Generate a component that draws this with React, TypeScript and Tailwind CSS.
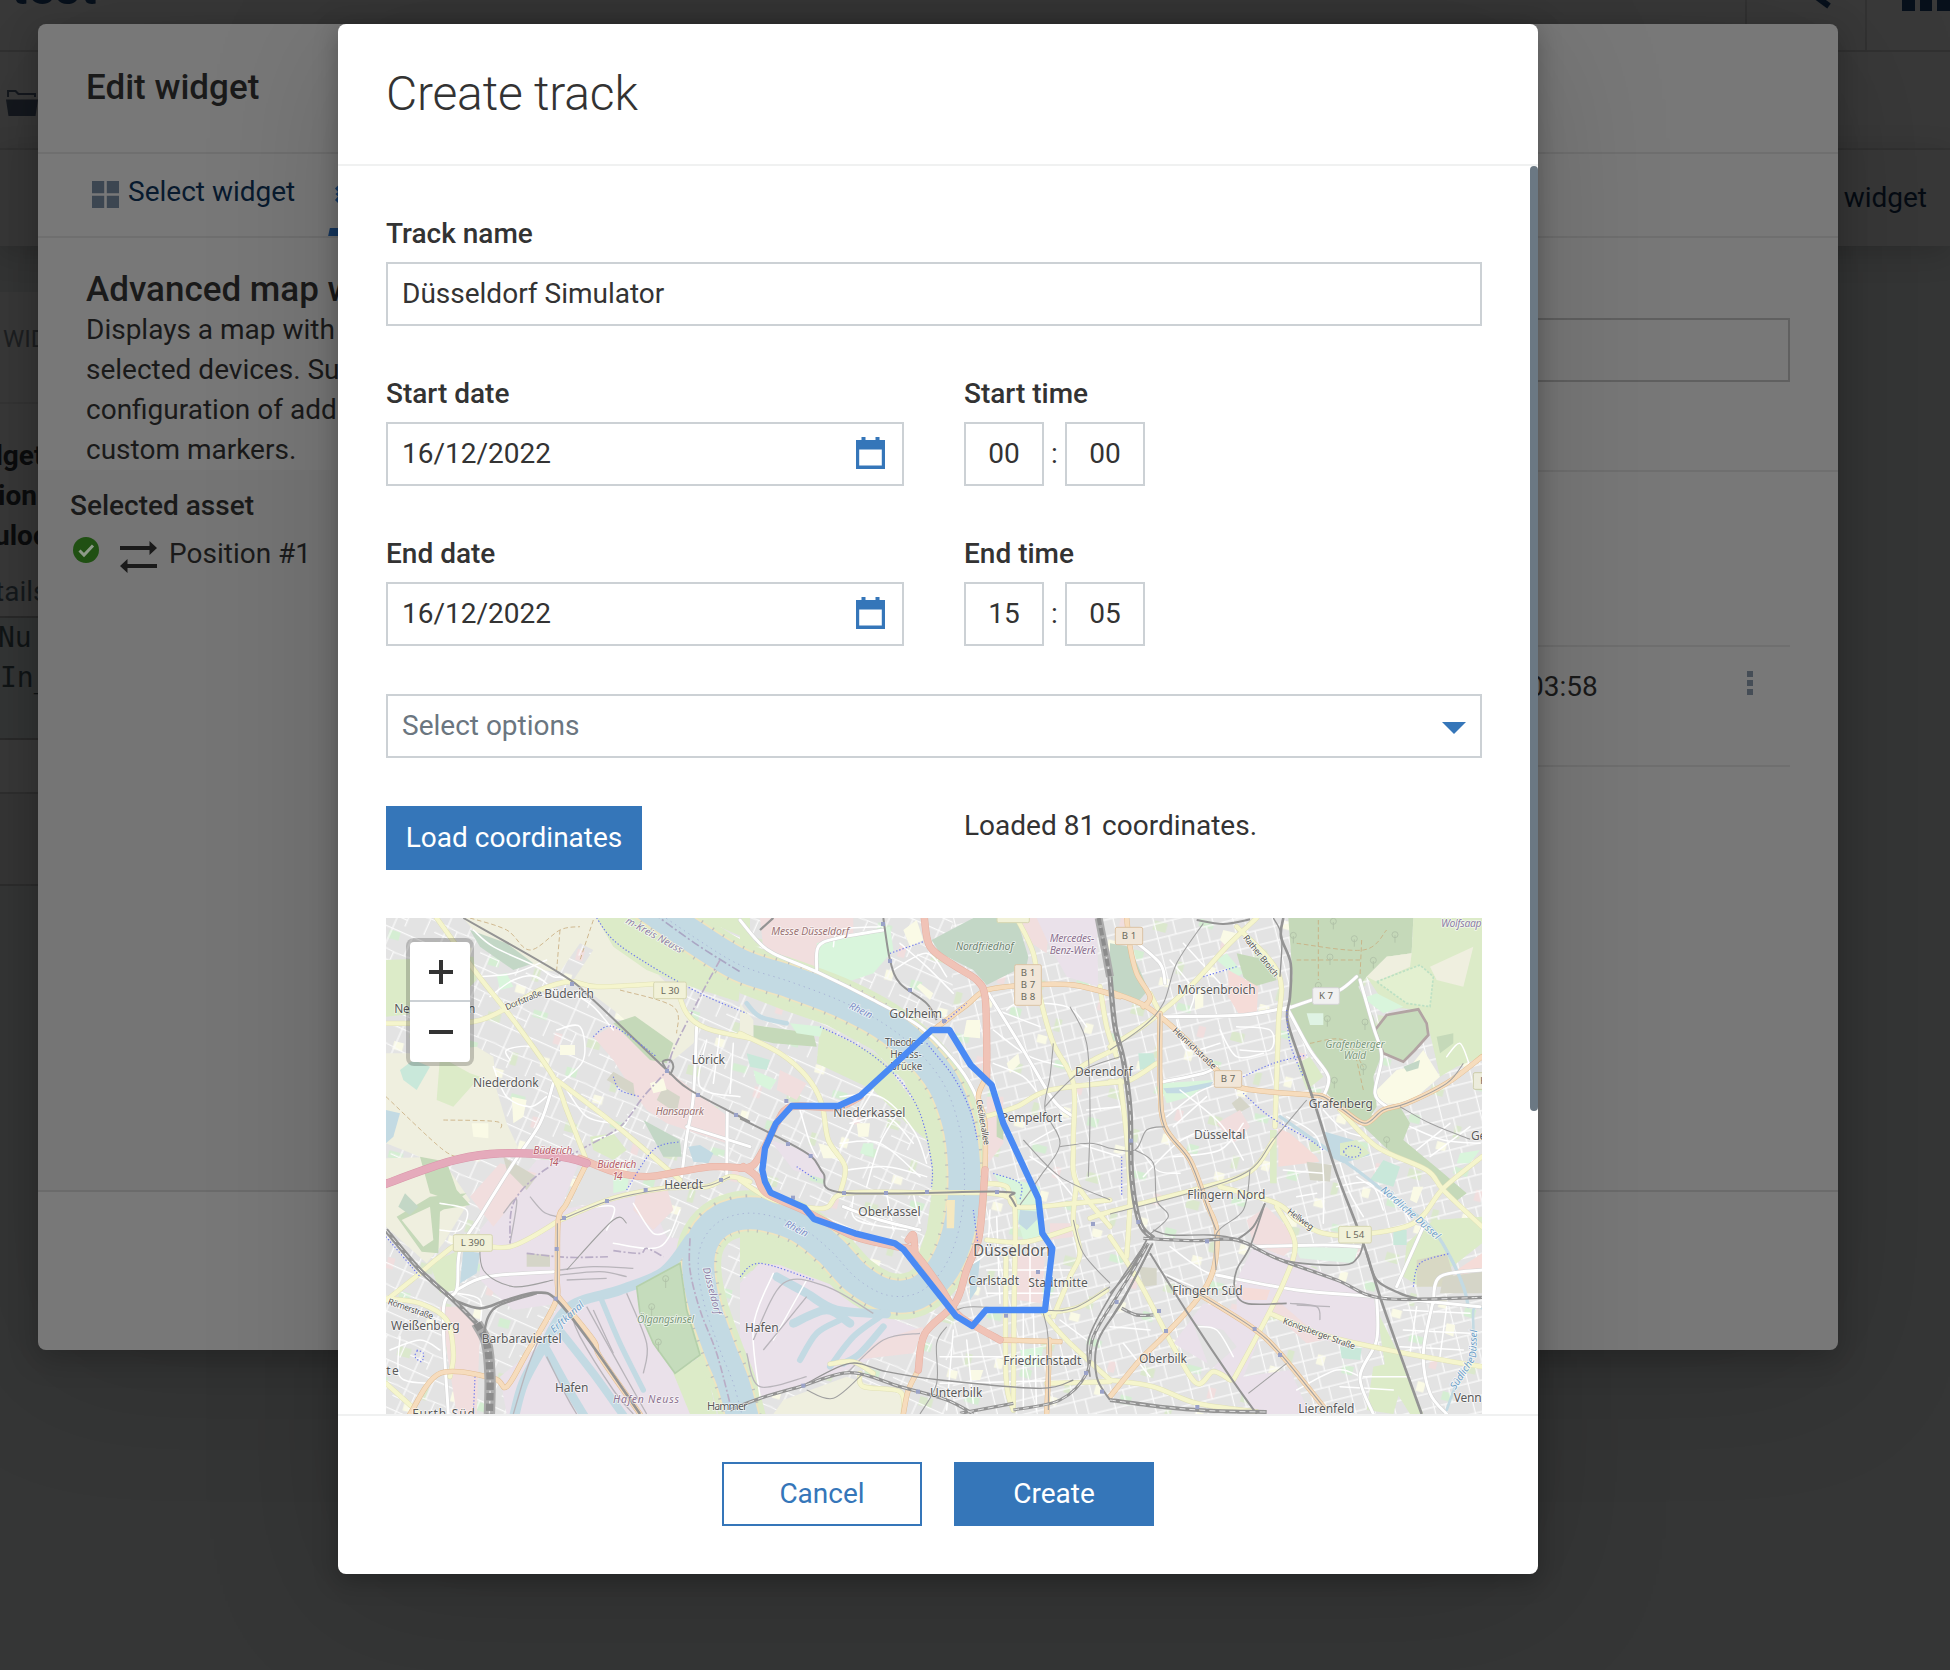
import React from "react";

/* ---------- geometry helpers for the map ---------- */

type Tile = "a" | "b" | "c";
const tileX: Record<Tile, number> = { a: -18, b: 1062, c: 2172 };

function parse(tile: Tile, pts: string): number[][] {
  return pts.split(" ").map((p) => {
    const [x, y] = p.split(",").map(Number);
    return [x + tileX[tile], y - 24];
  });
}

function curve(tile: Tile, pts: string): string {
  const p = parse(tile, pts);
  let d = `M${p[0][0]},${p[0][1]}`;
  for (let i = 0; i < p.length - 1; i++) {
    const p0 = p[i - 1] || p[i];
    const p1 = p[i];
    const p2 = p[i + 1];
    const p3 = p[i + 2] || p2;
    d += `C${p1[0] + (p2[0] - p0[0]) / 6},${p1[1] + (p2[1] - p0[1]) / 6} ${p2[0] - (p3[0] - p1[0]) / 6},${p2[1] - (p3[1] - p1[1]) / 6} ${p2[0]},${p2[1]}`;
  }
  return d;
}

function poly(tile: Tile, pts: string): string {
  return "M" + parse(tile, pts).map((p) => p.join(",")).join("L") + "Z";
}

/* ---------- map data ---------- */

const FARM = "#efefdf";
const WOOD = "#c5d9b9";
const GRASS = "#dcebc8";
const PARK = "#d9f5dc";
const CEM = "#c3d7c6";
const IND = "#eae1ea";
const COM = "#f1dede";
const SCHOOL = "#fafae6";
const WATER = "#c3dae3";
const POOL = "#c9e8da";

const areas: [Tile, string, string][] = [
  ["a", FARM, "250,24 660,24 720,110 830,190 900,260 920,310 960,350 940,400 880,450 760,350 700,300 620,240 580,210 640,120 600,100 540,185 480,180 280,60"],
  ["a", GRASS, "650,24 740,24 860,100 1000,150 1080,240 1075,275 900,220 800,180 700,110"],
  ["a", GRASS, "960,24 1110,24 1110,90 1040,60"],
  ["a", GRASS, "18,150 280,140 290,210 200,300 18,320"],
  ["a", FARM, "18,430 100,430 290,410 340,440 350,540 380,640 415,715 300,730 200,760 120,740 18,700"],
  ["a", FARM, "18,745 180,740 270,870 190,1000 140,1060 18,950"],
  ["a", GRASS, "180,440 270,490 300,500 220,590 170,570"],
  ["a", WOOD, "120,740 200,755 230,840 270,885 180,900 180,860 150,850"],
  ["a", COM, "640,380 700,345 840,460 900,510 1045,620 1040,700 920,660 860,640 800,600 770,560 700,450"],
  ["a", WOOD, "700,340 765,318 880,400 860,460 810,450"],
  ["a", "#d5d5c8", "700,485 760,520 765,560 680,510"],
  ["a", "#d5d5c8", "850,530 900,560 890,610 830,570"],
  ["a", CEM, "270,60 380,100 460,160 400,180 300,110"],
  ["a", CEM, "790,630 900,690 905,740 850,740"],
  ["a", GRASS, "630,680 700,670 740,720 700,750 640,720"],
  ["a", IND, "470,750 600,750 540,900 800,850 860,980 920,990 860,1080 770,1130 860,1350 960,1512 380,1512 360,1400 460,1320 540,1180 400,1200 300,1110 300,960"],
  ["a", "#e3e3e3", "620,770 690,770 740,850 640,880 570,890"],
  ["a", COM, "770,840 860,830 880,900 820,960 760,900"],
  ["a", COM, "270,860 360,760 470,790 340,950"],
  ["a", "#d5d5c8", "370,740 470,800 440,840 380,780"],
  ["a", "#d5d5c8", "440,1030 510,1035 510,1070 440,1070"],
  ["a", COM, "180,1190 240,1190 300,1260 290,1512 230,1512"],
  ["a", WOOD, "50,920 150,860 260,850 180,905 175,1030 125,1025"],
  ["a", FARM, "65,930 150,890 160,990 130,1010"],
  ["a", CEM, "55,890 75,850 115,890 90,915"],
  ["a", GRASS, "150,1060 240,1020 230,1140 180,1150"],
  ["a", WATER, "250,1020 300,1030 290,1090 240,1120"],
  ["a", WATER, "18,600 60,610 40,680 18,700"],
  ["a", WATER, "925,710 960,705 1000,730 985,760 940,755"],
  ["a", POOL, "60,480 100,450 150,470 110,540 70,510"],
  ["a", PARK, "350,195 380,190 400,230 360,240"],
  ["a", SCHOOL, "395,560 440,570 430,620 400,640"],
  ["a", SCHOOL, "275,640 325,640 325,685 280,680"],
  ["a", SCHOOL, "540,405 585,405 585,435 540,435"],
  ["a", SCHOOL, "810,520 850,505 860,540 820,550"],
  ["a", GRASS, "880,1390 970,1335 1010,1512 930,1512"],
  ["a", PARK, "700,800 750,790 740,840 700,850"],

  ["b", GRASS, "0,110 0,24 40,90 60,110"],
  ["b", COM, "60,24 340,24 340,70 240,100 230,175 70,115"],
  ["b", PARK, "230,100 290,80 450,50 460,120 400,190 280,230 240,200"],
  ["b", SCHOOL, "490,60 530,30 550,90 510,110"],
  ["b", SCHOOL, "540,220 580,250 570,270 530,230"],
  ["b", CEM, "575,90 700,24 830,24 865,140 860,165 740,225 700,180 600,130"],
  ["b", COM, "830,24 930,24 920,130 860,90"],
  ["b", IND, "890,24 1070,24 1075,230 980,200 930,110"],
  ["b", GRASS, "0,250 130,300 260,345 400,420 490,510 545,620 575,760 575,850 560,960 525,1060 620,1060 660,900 650,700 600,540 500,400 380,310 200,240 0,190"],
  ["b", GRASS, "240,350 420,440 540,600 570,700 500,640 400,540 230,460"],
  ["b", WOOD, "40,345 220,370 230,410 100,400 40,385"],
  ["b", FARM, "0,280 40,330 40,380 0,365"],
  ["b", PARK, "150,340 250,350 240,380 170,370"],
  ["b", PARK, "555,390 620,430 690,520 735,620 735,700 710,700 680,600 620,500 545,410"],
  ["b", POOL, "20,430 90,450 80,480 30,470"],
  ["b", PARK, "40,480 110,510 90,540 50,520"],
  ["b", COM, "120,480 200,520 170,570 110,540"],
  ["b", IND, "90,690 220,730 260,810 160,780"],
  ["b", SCHOOL, "350,640 390,640 385,680 355,680"],
  ["b", SCHOOL, "235,700 275,710 300,745 250,745"],
  ["b", SCHOOL, "680,330 720,330 720,385 670,380"],
  ["b", SCHOOL, "800,460 835,430 840,460 810,490"],
  ["b", PARK, "370,700 400,700 400,740 360,730"],
  ["b", COM, "740,560 790,560 790,700 745,760"],
  ["b", WOOD, "770,600 790,600 790,690 770,680"],
  ["b", PARK, "760,790 900,830 900,990 850,990 820,880"],
  ["b", WATER, "840,900 900,905 890,930 860,960 835,940"],
  ["b", COM, "930,940 990,940 1000,980 930,990"],
  ["b", COM, "830,1030 915,1040 905,1180 830,1170"],
  ["b", WATER, "690,1060 720,1050 710,1140 690,1170"],
  ["b", GRASS, "0,960 90,945 200,990 330,1110 450,1210 400,1220 250,1130 60,1060 0,1110"],
  ["b", IND, "0,1120 60,1060 120,1065 340,1150 430,1215 540,1260 430,1330 320,1380 200,1420 60,1470 0,1280"],
  ["b", COM, "340,1350 420,1290 550,1250 520,1330"],
  ["b", SCHOOL, "690,1380 730,1380 720,1410 690,1410"],
  ["b", FARM, "130,1470 320,1400 500,1460 490,1512 100,1512"],
  ["b", PARK, "840,1320 910,1310 900,1370 850,1370"],

  ["c", CEM, "0,100 60,110 115,240 80,280 0,240"],
  ["c", PARK, "320,150 350,130 400,190 380,200"],
  ["c", WOOD, "380,130 470,150 500,210 430,230 400,200"],
  ["c", "#f5dcd8", "355,180 445,230 440,310 385,310 355,260"],
  ["c", SCHOOL, "255,240 280,230 280,290 255,300"],
  ["c", SCHOOL, "340,60 380,70 350,110 330,90"],
  ["c", POOL, "85,430 130,430 140,470 90,480"],
  ["c", PARK, "150,520 310,510 240,560 170,580"],
  ["c", WATER, "160,535 230,530 310,515 300,530 220,550 170,550"],
  ["c", "#d5d5c8", "365,580 390,560 420,590 385,610"],
  ["c", COM, "320,640 390,600 420,650 370,700"],
  ["c", WOOD, "535,24 910,24 905,130 830,140 770,200 745,230 790,320 820,420 790,500 800,590 765,645 700,600 650,550 655,490 560,350 532,290 548,200"],
  ["c", WOOD, "740,630 870,590 900,640 880,690 1000,790 1070,850 1030,880 960,790 840,725"],
  ["c", GRASS, "910,24 1116,24 1116,440 1040,470 990,500 960,370 930,300 830,290 770,200 830,140 905,130"],
  ["c", FARM, "770,200 830,140 905,130 900,170 800,215"],
  ["c", FARM, "960,170 1090,110 1060,230 980,210"],
  ["c", "#e3f0d0", "800,215 930,165 970,200 960,290 890,280"],
  ["c", PARK, "760,265 800,250 880,290 820,310"],
  ["c", "#dff3e4", "590,310 640,310 640,345 600,345"],
  ["c", SCHOOL, "800,540 860,480 900,470 940,420 990,500 920,560 860,582 805,580"],
  ["c", "#c3d7c6", "880,470 930,450 925,475 890,485"],
  ["c", WOOD, "980,380 1030,370 1030,400 990,430"],
  ["c", GRASS, "560,460 600,440 640,500 590,540"],
  ["c", "#f5dcd8", "505,655 540,670 620,740 628,755 505,770"],
  ["c", GRASS, "480,660 500,660 500,820 480,820"],
  ["c", "#d5d5c8", "590,755 665,765 660,815 600,810"],
  ["c", WATER, "645,665 730,690 780,735 700,760 660,740"],
  ["c", GRASS, "690,700 740,690 780,730 740,750 690,735"],
  ["c", POOL, "820,750 870,770 850,830 780,810"],
  ["c", SCHOOL, "910,830 940,830 920,880 900,870"],
  ["c", SCHOOL, "520,920 560,900 560,950 540,950"],
  ["c", COM, "410,930 470,890 540,960 550,1010 520,1040 430,1000"],
  ["c", IND, "380,1110 430,1010 560,1050 790,1160 810,1280 780,1310 640,1290 480,1210 400,1400 540,1380 600,1512 440,1512 360,1400 190,1300 280,1180 380,1200"],
  ["c", "#dff3e4", "555,1010 745,1015 730,1060 570,1045"],
  ["c", "#d5d5c8", "85,1070 140,1075 140,1125 100,1130"],
  ["c", "#f5dcd8", "380,1130 480,1140 470,1170 400,1170"],
  ["c", "#e3e3e3", "250,1240 340,1260 380,1310 300,1380"],
  ["c", COM, "490,1160 640,1290 590,1300 490,1210"],
  ["c", GRASS, "800,1200 870,1340 940,1512 900,1512 830,1400"],
  ["c", GRASS, "790,1370 840,1360 870,1440 850,1512 770,1500"],
  ["c", GRASS, "890,1000 970,930 1116,920 1116,1000 1040,1060 930,1130 880,1100"],
  ["c", "#d8d8c4", "920,1050 1010,1030 1040,1130 920,1130"],
  ["c", "#f5dcd8", "1040,1080 1116,1030 1116,1080 1040,1100"],
  ["c", "#d5d5c8", "1000,1100 1116,1085 1116,1150 990,1150"],
  ["c", POOL, "690,1310 755,1315 750,1350 695,1345"],
  ["c", POOL, "850,960 890,960 890,1005 850,1005"],
  ["c", SCHOOL, "1010,1240 1035,1245 1030,1280 1005,1270"],
  ["c", PARK, "1050,730 1110,720 1080,760 1040,760"],
];

const river =
  "-300,-30 -140,80 0,165 150,215 300,272 430,340 530,420 610,520 655,640 672,760 670,880 645,1000 600,1090 530,1150 440,1155 350,1105 270,1020 180,950 80,915 0,912 -70,940 -115,1000 -125,1080 -105,1190 -60,1320 -20,1420 10,1530";

const waterways: [Tile, number, string][] = [
  ["a", 30, "930,985 850,1085 720,1140 570,1190 490,1310 430,1420 400,1530"],
  ["a", 26, "500,1320 560,1430 620,1530"],
  ["a", 24, "530,1250 640,1390 740,1530"],
  ["a", 16, "665,1170 720,1300 790,1440"],
  ["b", 26, "110,1100 200,1150 290,1200 440,1212"],
  ["b", 26, "160,1240 260,1200 330,1240"],
  ["b", 18, "180,1350 230,1270 300,1230"],
  ["b", 18, "270,1370 340,1280 420,1220"],
  ["b", 20, "430,1250 360,1330 310,1360"],
  ["b", 14, "20,280 60,320 140,340"],
  ["c", 10, "510,620 640,710 740,780 830,850 960,950 1020,1040 1060,1130 1075,1190"],
  ["c", 8, "1116,1195 1090,1200 1088,1320 1040,1420 1010,1500"],
];

const minor: [Tile, string][] = [
  ["a", "280,60 340,110 470,170 520,200 560,200"],
  ["a", "300,200 400,190 500,150"],
  ["a", "330,260 400,210 470,200 540,260"],
  ["a", "390,450 380,420 450,410 480,450"],
  ["a", "580,250 640,290 700,360"],
  ["a", "530,360 600,350 610,450 540,520"],
  ["a", "340,470 380,560 450,590 500,560"],
  ["a", "560,540 620,620 700,640"],
  ["a", "760,600 720,660 640,690"],
  ["a", "980,390 960,530 1080,560"],
  ["a", "1020,370 1000,520"],
  ["a", "1060,400 1050,550"],
  ["a", "180,880 260,900 240,960 180,960"],
  ["a", "230,1150 300,1170 300,1250"],
  ["a", "30,1320 120,1290 180,1320"],
  ["a", "60,1280 60,1400 150,1420"],
  ["a", "700,1000 840,1010 900,900"],
  ["a", "760,880 820,970 870,960"],
  ["a", "590,900 700,890 680,960"],
  ["b", "280,110 300,60 420,50"],
  ["b", "460,180 560,130 620,200"],
  ["b", "480,100 560,170 640,250"],
  ["b", "300,560 420,560 520,660 560,760"],
  ["b", "330,640 440,620 520,700"],
  ["b", "300,700 420,700 540,800"],
  ["b", "320,780 440,770 560,800"],
  ["b", "400,540 340,640 300,720"],
  ["b", "480,600 420,700 380,830"],
  ["b", "340,860 350,930 500,960"],
  ["b", "440,850 460,960"],
  ["b", "520,850 540,940"],
  ["b", "180,600 210,700 230,740"],
  ["b", "770,300 900,350"],
  ["b", "760,360 870,440 980,470"],
  ["b", "760,460 850,500 900,560"],
  ["b", "800,300 840,280 980,290 1040,350"],
  ["b", "870,700 960,650 1000,640"],
  ["b", "870,740 940,790 1000,860"],
  ["b", "1010,700 1140,740"],
  ["b", "1040,600 1140,590"],
  ["b", "750,900 740,1020 700,1060"],
  ["b", "770,920 780,1180"],
  ["b", "870,1010 870,1180"],
  ["b", "740,1080 1000,1080"],
  ["b", "740,1150 960,1150"],
  ["b", "850,1210 850,1500"],
  ["b", "880,1210 890,1500"],
  ["b", "640,1260 620,1500"],
  ["b", "680,1290 700,1480"],
  ["b", "600,1340 1000,1340"],
  ["b", "600,1420 1040,1410"],
  ["b", "100,1090 40,1250 60,1460"],
  ["b", "200,1110 100,1290"],
  ["b", "960,1230 1040,1290"],
  ["c", "180,150 250,240 240,300"],
  ["c", "220,100 330,220"],
  ["c", "200,330 230,420 330,400"],
  ["c", "330,360 380,440 460,430"],
  ["c", "380,350 480,360 480,420 390,420"],
  ["c", "170,620 260,550 330,520"],
  ["c", "190,650 290,560"],
  ["c", "210,540 330,640 400,750"],
  ["c", "190,740 330,720 400,640"],
  ["c", "100,800 200,700 280,660"],
  ["c", "80,700 140,780 210,790"],
  ["c", "530,620 620,680 640,790 640,940"],
  ["c", "520,780 640,790"],
  ["c", "560,860 620,850"],
  ["c", "680,830 780,820 820,900"],
  ["c", "690,760 720,850 760,920"],
  ["c", "740,800 860,880 900,930"],
  ["c", "640,600 700,660 760,680"],
  ["c", "900,650 1000,690 1110,700"],
  ["c", "920,720 1020,640"],
  ["c", "960,740 1080,650"],
  ["c", "880,1200 1080,1210"],
  ["c", "880,1260 1080,1270"],
  ["c", "870,1310 1060,1320"],
  ["c", "920,1190 900,1330"],
  ["c", "1010,1190 990,1340"],
  ["c", "180,1010 300,1090 320,1020"],
  ["c", "160,1090 250,1130"],
  ["c", "260,1250 320,1260 370,1340"],
  ["c", "0,1250 120,1260"],
  ["c", "40,1300 120,1400"],
  ["c", "760,1400 900,1400"],
  ["c", "690,1430 850,1440"],
  ["c", "560,1440 680,1380 750,1400"],
  ["c", "1010,440 1050,400 1080,470"],
];

const tertiary: [Tile, string][] = [
  ["a", "520,520 480,640 400,760 300,920 240,1020 230,1140 190,1200 205,1512"],
  ["a", "230,1140 320,1100 520,1085"],
  ["a", "950,350 940,560 920,680 905,800"],
  ["a", "1042,600 1040,800"],
  ["a", "920,650 1110,710"],
  ["b", "0,30 50,90 100,130 240,190 400,270 540,350 640,450 700,540 735,640"],
  ["b", "230,180 235,110 290,85 430,60"],
  ["b", "745,250 850,420 940,570 1000,620"],
  ["b", "310,890 420,930 540,960"],
  ["c", "535,300 600,420 655,500 640,560"],
  ["c", "750,210 790,350 815,440 795,550 830,590"],
  ["c", "520,300 620,265 690,240 740,200"],
  ["c", "320,1095 560,1140 800,1160 1110,1190"],
  ["c", "800,1160 800,1290 750,1400 790,1512"],
  ["c", "160,320 400,315 540,290"],
  ["c", "860,1130 940,950"],
  ["c", "970,1180 990,1100 1116,1080"],
  ["c", "970,1170 940,1330 960,1450 1010,1512"],
  ["c", "70,90 150,160 165,220"],
  ["c", "160,515 280,490 320,470"],
  ["c", "430,1010 640,1005 750,1010"],
];

const secondary: [Tile, string][] = [
  ["a", "170,24 290,190 400,330 520,500 560,600 615,740"],
  ["a", "18,340 120,340 280,335 370,300 480,240 570,215 650,230 820,222"],
  ["a", "890,230 920,310 980,355 1110,385"],
  ["b", "0,370 120,430 200,500 245,580 265,690 315,770 300,850"],
  ["a", "530,510 700,640 900,810"],
  ["a", "540,930 700,865 850,835 980,830 1050,800 1110,815"],
  ["b", "0,810 100,870 250,895 315,850 560,848 735,848"],
  ["a", "540,930 390,1010 250,1000 180,1040 120,1090 20,1170"],
  ["a", "20,1165 120,1180 200,1230 220,1330 210,1400"],
  ["a", "18,1420 120,1512"],
  ["b", "735,848 800,860 825,900 822,1200 820,1500"],
  ["b", "798,1040 798,1400 820,1500"],
  ["b", "830,24 880,130 900,260 940,400 1000,520 1000,700 1010,820 1110,950"],
  ["b", "735,620 830,590 930,540 1140,515"],
  ["b", "1010,820 1000,930 1020,1030 990,1100 940,1220"],
  ["b", "735,820 800,830 830,890 1000,880 1110,870"],
  ["b", "1080,230 1100,350 1130,440"],
  ["b", "1140,410 1040,460 1000,490"],
  ["b", "740,990 860,995 1010,950"],
  ["b", "920,1210 1020,1190 1100,1140"],
  ["b", "910,1210 980,1290 1110,1410"],
  ["b", "360,1390 370,1430 480,1445 490,1512"],
  ["b", "270,1362 340,1355 400,1390"],
  ["b", "920,1420 1110,1415"],
  ["c", "440,24 350,110 240,230 110,340 0,410"],
  ["c", "380,50 505,190 505,350 495,650"],
  ["c", "0,515 60,510 140,460"],
  ["c", "30,510 50,680 60,860 50,1040"],
  ["c", "-60,925 0,905 270,835 420,785 490,690"],
  ["c", "330,830 500,880 560,930 640,970 740,975 910,940 1000,835 1116,740"],
  ["c", "690,600 800,710 950,780 1000,840 1116,950"],
  ["c", "500,890 555,1000 520,1120 440,1280 370,1410"],
  ["c", "480,1210 640,1275 860,1325 1116,1370"],
  ["c", "0,980 90,1120 190,1310 260,1420 310,1385 360,1410"],
  ["c", "0,1410 130,1430 260,1480 440,1505"],
  ["c", "120,250 150,310"],
];

const primary: [Tile, string][] = [
  ["b", "580,360 680,285 740,240 860,225 1000,225 1140,260"],
  ["c", "0,245 110,290 220,380 330,490 400,535 600,555 640,560 700,600 765,640 820,600 890,580 1010,520 1116,440"],
  ["c", "50,24 60,110 80,190 120,260 100,290"],
  ["c", "150,310 150,520 165,650 240,750 290,880 320,960 310,1080 260,1170 160,1280 90,1350 0,1460"],
  ["c", "280,1160 430,1255 510,1330 640,1490"],
  ["a", "615,770 560,880 535,930 532,1100 525,1180 440,1330 380,1430 340,1405 180,1390 90,1512"],
  ["a", "535,1160 640,1290 660,1340 780,1512"],
  ["b", "740,500 715,560 735,640 735,800"],
  ["b", "780,1290 960,1295"],
  ["b", "928,1290 925,1400 920,1512"],
  ["b", "535,1380 505,1440 490,1512"],
];

const trunk: [Tile, string][] = [
  ["a", "600,745 700,785 800,800 900,785 1000,770 1110,775"],
  ["b", "0,775 40,765 75,710 110,640 155,590 290,592 360,560"],
  ["b", "10,770 50,800 80,850 200,905 340,978 470,1010 520,1025 600,1130 650,1210 700,1245 780,1290"],
  ["b", "553,24 570,110 640,165 710,210 735,260 740,400 740,500"],
  ["b", "735,780 727,890 715,990 680,1080 645,1180 555,1270 535,1380"],
  ["b", "505,990 520,975 525,1030"],
];

const rail: [Tile, number, string][] = [
  ["a", 6, "250,24 540,190 640,270 860,480 930,540 1070,615 1110,635"],
  ["a", 6, "860,480 848,455 870,450 880,470 870,495"],
  ["b", 6, "0,625 130,690 215,740 250,790 310,848 780,845 810,860 828,890"],
  ["a", 14, "18,960 120,1080 220,1170 290,1240"],
  ["a", 34, "290,1240 320,1300 330,1400 328,1520"],
  ["a", 8, "220,1170 300,1195 380,1170 470,1148 530,1170 640,1310 780,1512"],
  ["a", 7, "310,1280 325,1220 360,1185 470,1150"],
  ["b", 10, "-30,1500 60,1465 180,1430 330,1388 480,1430 620,1470 700,1512"],
  ["b", 4, "200,1420 330,1360 440,1385 600,1410 900,1435 1000,1410"],
  ["b", 6, "430,24 450,150 480,220 560,280 590,330"],
  ["b", 7, "60,60 100,24"],
  ["b", 24, "1076,24 1095,120 1110,200"],
  ["b", 16, "1110,200 1125,350 1150,450 1170,600 1175,800 1200,940 1240,985"],
  ["b", 10, "820,1480 660,1510"],
  ["b", 9, "820,1500 960,1470 1040,1390 1060,1280 1130,1160 1180,1080 1225,1000"],
  ["b", 6, "1110,1470 1070,1400 1075,1290 1150,1170 1235,1005"],
  ["b", 5, "1050,1400 1045,1290 1110,1160 1210,1010"],
  ["c", 5, "0,1230 60,1130 128,1000"],
  ["c", 5, "0,1190 50,1110 105,1000"],
  ["c", 5, "0,1150 60,1080 110,990"],
  ["c", 10, "100,985 250,992 380,990 500,1045 680,1110 820,1165 1116,1162"],
  ["c", 6, "380,990 430,950 465,880"],
  ["c", 4, "130,960 180,975 300,975 380,985"],
  ["c", 8, "520,24 513,80 542,160 540,260 532,330 570,450 620,600 680,790 760,1000 820,1190 935,1512"],
  ["c", 4, "490,24 515,80 510,200"],
  ["c", 7, "770,1030 800,1110 870,1150 920,1165"],
  ["c", 5, "430,1015 540,1055 700,1065 745,1040 760,1000"],
  ["c", 12, "0,1470 150,1490 300,1502 470,1506"],
  ["c", 6, "120,1030 240,1220 360,1400 440,1512"],
  ["c", 10, "35,1195 80,1215 130,1215"],
  ["c", 6, "260,30 340,42 420,28"],
  ["c", 5, "465,880 420,1010 380,1080 375,1140 410,1180 530,1180"],
];

const tram: [Tile, string][] = [
  ["c", "280,40 200,160 160,280 100,350 0,420"],
  ["c", "590,570 490,690 420,780 270,840 0,912"],
  ["c", "150,310 148,520 163,650 238,750 288,880 318,960"],
  ["c", "420,780 400,900 320,970 318,1080"],
  ["c", "870,590 960,640 1080,688"],
  ["c", "600,555 640,560 700,600 765,640 820,600 890,580 1010,520 1060,460"],
  ["c", "75,720 130,760 140,870 175,920 110,980"],
  ["c", "165,650 110,660 75,720 0,715"],
  ["c", "170,1100 280,1160 430,1255 510,1330 640,1490"],
  ["c", "415,1450 530,1360"],
  ["b", "940,400 930,500 915,600 960,700 900,800 840,885"],
  ["b", "1140,440 1030,480 960,540 915,590"],
  ["b", "960,710 1050,700 1110,715"],
  ["b", "850,690 960,800 1110,870"],
  ["b", "990,290 1040,400 1050,600 1045,800"],
  ["b", "650,1200 700,1190 900,1200 1000,1195 1110,1130"],
  ["b", "620,1250 590,1300 590,1420 540,1512"],
  ["b", "910,1210 925,1290 925,1500"],
  ["b", "1000,930 1030,1030 1110,1120"],
  ["b", "200,1440 280,1465 370,1390"],
  ["a", "540,930 700,868 850,838 980,828 1050,800"],
  ["a", "532,940 532,1170"],
  ["a", "560,1080 700,930 740,940"],
  ["a", "300,980 310,1080 400,1130 520,1110"],
];

const yardTracks: [Tile, string][] = [
  ["a", "540,1080 640,1070 760,1075"],
  ["a", "540,1095 660,1085 740,1100"],
  ["a", "560,1110 680,1105"],
  ["a", "370,910 410,870 390,1000"],
  ["a", "450,860 490,905 530,920"],
  ["a", "570,1200 600,1280 700,1440 760,1512"],
  ["a", "620,1190 720,1370 800,1512"],
  ["a", "500,1340 560,1460 590,1512"],
  ["a", "740,1150 800,1300 790,1390"],
  ["a", "400,1512 440,1380 480,1280"],
  ["a", "640,1200 700,1330"],
  ["b", "40,1290 130,1120 260,1130 400,1210"],
  ["b", "20,1330 60,1430 200,1400"],
  ["b", "70,1320 200,1160"],
  ["b", "320,1390 430,1290 540,1270"],
  ["c", "540,1180 620,1190 630,1230"],
  ["c", "560,1185 660,1190"],
];

const footpaths: [Tile, string][] = [
  ["a", "650,24 700,90 800,160 960,250 1100,310"],
  ["a", "640,380 700,350 830,440"],
  ["a", "18,980 120,1100"],
  ["a", "700,500 720,540 780,560"],
  ["a", "740,840 820,720 900,695"],
  ["a", "285,1400 280,1512"],
  ["b", "240,350 360,410 470,500 540,610 575,760 575,830"],
  ["b", "560,400 640,500 690,600 712,690"],
  ["b", "450,130 550,95"],
  ["b", "0,1100 60,1060 220,1110"],
  ["b", "170,770 230,810"],
  ["b", "760,790 840,820 840,870"],
  ["b", "610,340 680,280"],
  ["b", "700,900 715,1010"],
  ["c", "530,300 540,400 580,500"],
  ["c", "400,550 480,620 600,690 640,720"],
  ["c", "280,200 380,170"],
  ["c", "910,1130 930,1060 1020,1030"],
  ["c", "35,740 35,860"],
  ["c", "400,500 490,460 590,435"],
];

const tracks: [Tile, string][] = [
  ["a", "270,24 380,60 450,120 540,60 600,50"],
  ["a", "540,60 530,180"],
  ["a", "640,30 600,150"],
  ["a", "18,560 190,720 250,740"],
  ["a", "190,630 350,635 360,660"],
  ["a", "720,240 880,290 890,370"],
  ["c", "560,100 760,120 830,60"],
  ["c", "560,150 750,150"],
  ["c", "625,30 625,210"],
  ["c", "755,90 750,200"],
  ["c", "600,400 700,390 760,470"],
  ["c", "760,540 740,450"],
];

const labels: [Tile, number, number, number, number, string][] = [
  ["a", 493, 264, 149, 36, "Büderich"],
  ["a", 43, 309, 46, 36, "Ne"],
  ["a", 264, 309, 20, 36, "n"],
  ["a", 279, 530, 197, 36, "Niederdonk"],
  ["a", 935, 461, 100, 36, "Lörick"],
  ["a", 853, 838, 116, 36, "Heerdt"],
  ["a", 33, 1260, 206, 36, "Weißenberg"],
  ["a", 305, 1299, 240, 36, "Barbaraviertel"],
  ["a", 525, 1445, 100, 36, "Hafen"],
  ["a", 19, 1396, 37, 36, "te"],
  ["a", 97, 1524, 188, 36, "Furth-Süd"],
  ["a", 981, 1500, 122, 33, "Hammer"],
  ["b", 448, 324, 158, 36, "Golzheim"],
  ["b", 435, 407, 114, 30, "Theodor-"],
  ["b", 451, 444, 94, 30, "Heuss-"],
  ["b", 451, 480, 96, 30, "Brücke"],
  ["b", 280, 620, 216, 36, "Niederkassel"],
  ["b", 355, 917, 187, 36, "Oberkassel"],
  ["b", 1005, 499, 173, 36, "Derendorf"],
  ["b", 782, 637, 184, 36, "Pempelfort"],
  ["b", 699, 1037, 235, 46, "Düsseldorf"],
  ["b", 685, 1125, 152, 36, "Carlstadt"],
  ["b", 865, 1130, 178, 36, "Stadtmitte"],
  ["b", 15, 1265, 101, 36, "Hafen"],
  ["b", 790, 1364, 234, 36, "Friedrichstadt"],
  ["b", 570, 1461, 157, 36, "Unterbilk"],
  ["c", 202, 252, 235, 36, "Mörsenbroich"],
  ["c", 596, 595, 193, 36, "Grafenberg"],
  ["c", 252, 686, 154, 36, "Düsseltal"],
  ["c", 232, 866, 234, 36, "Flingern Nord"],
  ["c", 187, 1155, 211, 36, "Flingern Süd"],
  ["c", 87, 1360, 144, 36, "Oberbilk"],
  ["c", 565, 1508, 168, 36, "Lierenfeld"],
  ["c", 1031, 1475, 84, 36, "Venn"],
  ["c", 1083, 691, 46, 36, "Ge"],
];

const italics: [Tile, number, number, number, string, string][] = [
  ["a", 827, 614, 145, "Hansapark", "#9b7474"],
  ["a", 460, 731, 117, "Büderich", "#b8606a"],
  ["a", 505, 767, 31, "14", "#b8606a"],
  ["a", 652, 775, 117, "Büderich", "#b8606a"],
  ["a", 697, 811, 31, "14", "#b8606a"],
  ["a", 771, 1240, 172, "Ölgangsinsel", "#7d9a7d"],
  ["a", 699, 1478, 198, "Hafen Neuss", "#8d7290"],
  ["b", 94, 74, 233, "Messe Düsseldorf", "#9b7474"],
  ["b", 647, 120, 174, "Nordfriedhof", "#6f8573"],
  ["b", 929, 95, 134, "Mercedes-", "#8d7290"],
  ["b", 929, 131, 138, "Benz-Werk", "#8d7290"],
  ["c", 646, 413, 178, "Grafenberger", "#7d9a7d"],
  ["c", 701, 448, 67, "Wald", "#7d9a7d"],
  ["c", 993, 50, 122, "Wolfsaap", "#8d7fa6"],
];

const turned: [Tile, number, number, number, number, string, string, boolean][] = [
  ["a", 380, 301, -23, 118, "Dorfstraße", "#555", false],
  ["a", 22, 1182, 19, 142, "Römerstraße", "#555", false],
  ["a", 735, 38, 29, 190, "m-Kreis Neuss", "#8d7fa6", true],
  ["a", 968, 1075, 75, 145, "Düsseldorf", "#8d7fa6", true],
  ["a", 522, 1270, -42, 124, "Erftkanal", "#6f9fc8", true],
  ["b", 325, 294, 26, 74, "Rhein", "#7f90c8", true],
  ["b", 132, 948, 27, 74, "Rhein", "#7f90c8", true],
  ["b", 708, 570, 80, 138, "Cecilienallee", "#555", false],
  ["c", 398, 84, 51, 152, "Rather Broich", "#555", false],
  ["c", 186, 364, 43, 168, "Heinrichstraße", "#555", false],
  ["c", 530, 908, 36, 90, "Hellweg", "#555", false],
  ["c", 517, 1240, 20, 228, "Königsberger Straße", "#555", false],
  ["c", 810, 842, 41, 225, "Nördliche Düssel", "#6f9fc8", true],
  ["c", 1036, 1440, -57, 108, "Südliche", "#6f9fc8", true],
  ["c", 1098, 1344, -88, 84, "Düssel", "#6f9fc8", true],
];

const shields: [Tile, number, number, number, number, string[], string, string][] = [
  ["a", 821, 216, 98, 50, ["L 30"], "#f1f1d8", "#d6d6b0"],
  ["a", 220, 974, 117, 50, ["L 390"], "#f1f1d8", "#d6d6b0"],
  ["b", 824, 164, 80, 122, ["B 1", "B 7", "B 8"], "#f1e6d8", "#dcc3a4"],
  ["b", 771, -12, 97, 50, ["L 55"], "#f1f1d8", "#d6d6b0"],
  ["c", 16, 52, 82, 52, ["B 1"], "#f1e6d8", "#dcc3a4"],
  ["c", 313, 482, 82, 50, ["B 7"], "#f1e6d8", "#dcc3a4"],
  ["c", 608, 233, 80, 50, ["K 7"], "#f1f1f1", "#d4d4d4"],
  ["c", 686, 949, 98, 50, ["L 54"], "#f1f1d8", "#d6d6b0"],
  ["c", 1090, 488, 60, 50, ["K"], "#ececdc", "#ccccaa"],
];

const stations: [Tile, number, number][] = [
  ["a", 576, 222], ["a", 861, 483], ["a", 954, 555], ["a", 1068, 615], ["a", 681, 873], ["a", 797, 840],
  ["a", 1023, 810], ["a", 552, 924], ["a", 530, 1017], ["a", 527, 1166],
  ["b", 429, 42], ["b", 450, 153], ["b", 510, 240], ["b", 612, 333], ["b", 139, 573], ["b", 144, 702],
  ["b", 212, 738], ["b", 312, 849], ["b", 438, 849], ["b", 561, 846], ["b", 771, 846], ["b", 159, 863],
  ["b", 1059, 942], ["b", 894, 1086], ["b", 798, 1217], ["b", 190, 1427], ["b", 534, 1445], ["b", 1038, 1389], ["b", 1086, 1445],
  ["c", 85, 936], ["c", 20, 1176], ["c", 147, 1203], ["c", 168, 1263], ["c", 434, 1257], ["c", 510, 1335], ["c", 63, 692], ["c", 291, 994], ["c", 262, 1491],
];

const trees: [number, number][] = [
  [550, 70], [670, 28], [733, 80], [660, 135], [790, 145], [855, 68], [625, 220], [652, 320], [765, 330], [760, 465], [673, 505], [830, 683],
];

const route =
  "155,588 295,588 360,558 575,360 628,360 692,465 755,525 790,640 895,865 907,970 937,1015 915,1200 738,1200 697,1248 648,1218 490,1018 465,1000 345,970 222,927 193,893 92,848 75,815 67,780 75,715 108,640";

function Roads({ data, width, color, casing }: { data: [Tile, string][]; width: number; color: string; casing: string }) {
  return (
    <g fill="none" strokeLinecap="round" strokeLinejoin="round">
      {data.map(([t, p], i) => (
        <path key={i} d={curve(t, p)} stroke={casing} strokeWidth={width + 3} />
      ))}
      {data.map(([t, p], i) => (
        <path key={"f" + i} d={curve(t, p)} stroke={color} strokeWidth={width} />
      ))}
    </g>
  );
}

function CityMap() {
  return (
    <svg viewBox="0 0 3288 1488" className="block h-[496px] w-[1096px]" fontFamily='"Noto Sans", sans-serif'>
      <defs>
        <pattern id="streets" width="150" height="132" patternUnits="userSpaceOnUse" patternTransform="rotate(24)">
          <path d="M0 20H150M0 78L70 84L150 78M30 0V132M96 20V84M62 84V132M124 78V132M0 112H62" fill="none" stroke="#fbfbfb" strokeWidth="3.6" />
        </pattern>
        <pattern id="blocks" width="116" height="92" patternUnits="userSpaceOnUse" patternTransform="rotate(-14)">
          <path d="M0 24H116M0 68H116M28 0V92M84 24V68M62 68V92M62 0V24" fill="none" stroke="#fbfbfb" strokeWidth="3.6" />
        </pattern>
        <pattern id="greens" width="310" height="260" patternUnits="userSpaceOnUse" patternTransform="rotate(15)">
          <path d="M20 30h34v26h-34zM190 150h44v22h-44z" fill="#d5eed3" />
          <path d="M120 90h30v24h-30zM250 20h24v30h-24z" fill="#fafae6" />
          <path d="M60 190h40v28h-40zM160 30h20v38h-20z" fill="#dbe8cd" />
          <path d="M270 200h22v34h-22z" fill="#f1dede" />
        </pattern>
      </defs>
      <rect width="3288" height="1488" fill="#e3e3e3" />
      <rect width="3288" height="1488" fill="url(#greens)" />
      <rect width="1700" height="1488" fill="url(#streets)" />
      <rect x="1700" width="1588" height="1488" fill="url(#blocks)" />
      {areas.map(([t, c, p], i) => (
        <path key={i} d={poly(t, p)} fill={c} />
      ))}
      <g fill="none" stroke="#c9ad80" strokeWidth="2.5" strokeDasharray="14 8">
        {tracks.map(([t, p], i) => (
          <path key={i} d={curve(t, p)} />
        ))}
      </g>

      {/* river, banks and harbour basins */}
      <path d={curve("b", river)} fill="none" stroke="#dcebc8" strokeWidth="138" />
      <path d={curve("b", river)} fill="none" stroke="#efe4c0" strokeWidth="106" />
      <path d={curve("b", river)} fill="none" stroke="#bfc0bd" strokeWidth="114" strokeDasharray="4 34" />
      <path d={curve("b", river)} fill="none" stroke={WATER} strokeWidth="96" />
      <path d={curve("b", river)} fill="none" stroke="#a9b5d6" strokeWidth="3" strokeDasharray="4 12" />
      <path d={curve("b", "-300,-20 -135,100 0,185")} fill="none" stroke="#aaa7c4" strokeWidth="5" strokeDasharray="26 8 6 8" />
      <g fill="none" stroke={WATER} strokeLinecap="round">
        {waterways.map(([t, w, p], i) => (
          <path key={i} d={curve(t, p)} strokeWidth={w} />
        ))}
      </g>
      <path d={poly("a", "770,1130 900,1060 920,1200 960,1335 885,1390 820,1300 780,1210")} fill="#c5dcbc" stroke="#b5d0ab" strokeWidth="5" />
      <path d={poly("b", "620,870 645,870 642,955 620,955")} fill="#f5e8c0" />
      <path d={poly("c", "795,360 830,315 925,298 950,340 955,375 915,420 880,455 820,430")} fill="#c8dcbd" stroke="#b2a4a3" strokeWidth="8" />
      <path d={poly("c", "800,215 930,165 970,200 960,290 890,280")} fill="none" stroke="#bce0c4" strokeWidth="5" strokeDasharray="7 5" />

      <g fill="none" stroke="#fff" strokeWidth="4.500" strokeLinecap="round">
        {minor.map(([t, p], i) => (
          <path key={i} d={curve(t, p)} />
        ))}
      </g>
      <g fill="none" stroke="#b9b5bb" strokeWidth="4">
        {yardTracks.map(([t, p], i) => (
          <path key={i} d={curve(t, p)} />
        ))}
      </g>
      <g fill="none" stroke="#b9adc6" strokeWidth="5" strokeDasharray="24 7 6 7">
        <path d={curve("a", "1020,150 960,260 880,420 860,480 790,560 720,650 600,720 480,790 400,880 390,1000")} />
        <path d={curve("a", "440,1030 560,1042 690,1040")} />
        <path d={curve("a", "700,1022 780,1030 800,1015 850,1040")} />
        <path d={curve("a", "930,985 930,1080 960,1200 1010,1330 1050,1480")} />
      </g>
      <Roads data={tertiary} width={9} color="#ffffff" casing="#d3d3d3" />
      <Roads data={secondary} width={12.5} color="#f5f5cd" casing="#e0e0b8" />
      <Roads data={primary} width={13} color="#f6dcbd" casing="#e2bd92" />
      <Roads data={trunk} width={19} color="#f0c3b7" casing="#e6b0a2" />
      <Roads data={[["a", "0,828 200,757 330,732 480,732 570,745 620,760"]]} width={22} color="#e5aabb" casing="#d995a9" />
      <g fill="none" stroke="#a0a0a0" strokeWidth="3.2">
        {tram.map(([t, p], i) => (
          <path key={i} d={curve(t, p)} />
        ))}
      </g>
      <g fill="none">
        {rail.map(([t, w, p], i) => (
          <path key={i} d={curve(t, p)} stroke={w > 20 ? "#ababab" : "#949494"} strokeWidth={w} />
        ))}
        {rail.map(([t, w, p], i) =>
          w > 8 ? (
            <path key={"d" + i} d={curve(t, p)} stroke="#e4e4e4" strokeWidth={w > 20 ? 4 : 3} strokeDasharray="18 12" />
          ) : null
        )}
        {rail.map(([t, w, p], i) =>
          w > 20 ? <path key={"e" + i} d={curve(t, p)} stroke="#8c8c8c" strokeWidth={w - 12} strokeDasharray="22 9" /> : null
        )}
      </g>
      <g fill="none" stroke="#6d78ee" strokeWidth="3.5" strokeDasharray="4 6">
        {footpaths.map(([t, p], i) => (
          <path key={i} d={curve(t, p)} />
        ))}
        <path d={curve("c", "700,725 720,708 750,715 745,738 715,740 700,725")} />
        <path d={curve("a", "110,1320 130,1330 125,1355 105,1340 112,1322")} />
      </g>
      <g fill="none" stroke="#aebfa6" strokeWidth="2.5">
        {trees.map(([x, y], i) => (
          <path key={i} d={`M${x + 2172} ${y - 16}v22m-9-24a9 9 0 1 0 18 0a9 9 0 1 0-18 0`} />
        ))}
        <path d="M839 1082v28m-9-28a9 9 0 1 0 18 0a9 9 0 1 0-18 0M797 1166v28m-9-28a9 9 0 1 0 18 0a9 9 0 1 0-18 0M817 1272v28m-9-28a9 9 0 1 0 18 0a9 9 0 1 0-18 0" />
      </g>
      {stations.map(([t, x, y], i) => (
        <rect key={i} x={x + tileX[t] - 6} y={y - 30} width="12" height="12" fill="#9aa2c8" />
      ))}

      {/* road number plates */}
      {shields.map(([t, x, y, w, h, rows, fill, stroke], i) => (
        <g key={i}>
          <rect x={x + tileX[t]} y={y - 24} width={w} height={h} rx="5" fill={fill} stroke={stroke} strokeWidth="3" />
          {rows.map((r, j) => (
            <text key={r} x={x + tileX[t] + w / 2} y={y + 11 + j * 36} fontSize="29" textAnchor="middle" fill="#6b6a5e">
              {r}
            </text>
          ))}
        </g>
      ))}

      {/* place names */}
      <g stroke="#ffffff" strokeOpacity="0.65" strokeWidth="5" strokeLinejoin="round" paintOrder="stroke">
        {labels.map(([t, x, y, w, s, text], i) => (
          <text key={i} x={x + tileX[t]} y={y - 24} fontSize={s} textLength={w} fill="#5a5a5a">
            {text}
          </text>
        ))}
        {italics.map(([t, x, y, w, text, c], i) => (
          <text key={i} x={x + tileX[t]} y={y - 24} fontSize="31.5" fontStyle="italic" textLength={w} fill={c}>
            {text}
          </text>
        ))}
        {turned.map(([t, x, y, a, w, text, c, it], i) => (
          <text
            key={i}
            transform={`translate(${x + tileX[t]} ${y - 24}) rotate(${a})`}
            fontSize={it ? 30 : 26}
            fontStyle={it ? "italic" : "normal"}
            textLength={w}
            fill={c}
          >
            {text}
          </text>
        ))}
      </g>

      <path d={poly("b", route)} fill="none" stroke="#4a8af4" strokeWidth="19" strokeLinejoin="round" />
    </svg>
  );
}

/* ---------- form pieces ---------- */

function CalendarIcon() {
  return (
    <svg viewBox="0 0 29 32" className="-mt-0.5 h-8 w-[29px]" fill="#3576b9">
      <path d="M0 3H5.500V0H9.500V3H19.500V0H23.500V3H29V32H0ZM3.200 12.500V28.500H25.800V12.500Z" fillRule="evenodd" />
    </svg>
  );
}

function DateField({ label, value }: { label: string; value: string }) {
  return (
    <div className="w-[518px]">
      <div className="h-10 font-medium leading-10">{label}</div>
      <div className="mt-2 flex h-16 items-center justify-between border-2 border-[#ccd1d5] pl-[14px] pr-[17px]">
        <span>{value}</span>
        <CalendarIcon />
      </div>
    </div>
  );
}

function TimeField({ label, hours, minutes }: { label: string; hours: string; minutes: string }) {
  return (
    <div>
      <div className="h-10 font-medium leading-10">{label}</div>
      <div className="mt-2 flex h-16 items-center">
        <div className="flex h-16 w-20 items-center justify-center border-2 border-[#ccd1d5]">{hours}</div>
        <div className="w-[21px] text-center">:</div>
        <div className="flex h-16 w-20 items-center justify-center border-2 border-[#ccd1d5]">{minutes}</div>
      </div>
    </div>
  );
}

function CreateTrackDialog() {
  return (
    <section className="absolute left-[338px] top-6 flex h-[1550px] w-[1200px] flex-col overflow-hidden rounded-lg bg-white">
      <header className="flex h-[142px] shrink-0 items-center border-b-2 border-[#f0f1f1] px-12">
        <h1 className="text-[48px] font-light leading-[56px] tracking-[-0.2px]">Create track</h1>
      </header>
      <div className="flex h-[1248px] shrink-0 justify-between overflow-hidden">
        <div className="flex flex-col gap-12 pl-12 pt-12">
          <div>
            <div className="h-10 font-medium leading-10">Track name</div>
            <div className="mt-2 flex h-16 w-[1096px] items-center border-2 border-[#ccd1d5] px-[14px]">Düsseldorf Simulator</div>
          </div>
          <div className="flex gap-[60px]">
            <DateField label="Start date" value="16/12/2022" />
            <TimeField label="Start time" hours="00" minutes="00" />
          </div>
          <div className="flex gap-[60px]">
            <DateField label="End date" value="16/12/2022" />
            <TimeField label="End time" hours="15" minutes="05" />
          </div>
          <div className="flex h-16 w-[1096px] items-center justify-between border-2 border-[#ccd1d5] pl-[14px] pr-[14px] text-[#6b7680]">
            <span>Select options</span>
            <svg viewBox="0 0 24 12" className="mt-1 h-3 w-6" fill="#3576b9">
              <path d="M0 0H24L12 12Z" />
            </svg>
          </div>
          <div className="flex">
            <button className="flex h-16 w-64 items-center justify-center bg-[#3576b9] text-white">Load coordinates</button>
            <p className="ml-[322px] h-10 leading-10">Loaded 81 coordinates.</p>
          </div>
          <div className="relative h-[496px] w-[1096px] shrink-0">
            <CityMap />
            <div className="absolute left-5 top-5 flex h-[128px] w-[68px] flex-col overflow-hidden rounded-lg border-4 border-black/20 bg-white bg-clip-padding">
              <div className="flex h-[60px] items-center justify-center border-b-2 border-[#ccd1d5]">
                <svg viewBox="0 0 24 24" className="ml-0.5 mt-0.5 h-6 w-6" fill="#333">
                  <path d="M10 0h4v10h10v4H14v10h-4V14H0v-4h10Z" />
                </svg>
              </div>
              <div className="flex h-[60px] items-center justify-center">
                <div className="ml-0.5 h-1 w-6 bg-[#333]" />
              </div>
            </div>
          </div>
        </div>
        <div className="h-[945px] w-2 rounded-sm bg-[#6b7883]" />
      </div>
      <footer className="flex flex-1 justify-center gap-8 border-t-2 border-[#f0f1f1] pt-[46px]">
        <button className="flex h-16 w-[200px] items-center justify-center border-2 border-[#3576b9] text-[#3576b9]">Cancel</button>
        <button className="flex h-16 w-[200px] items-center justify-center bg-[#3576b9] text-white">Create</button>
      </footer>
    </section>
  );
}

/* ---------- dimmed dialog behind ---------- */

function EditWidgetDialog() {
  return (
    <section className="absolute left-[38px] top-6 flex h-[1326px] w-[1800px] flex-col overflow-hidden rounded-lg bg-[#787878] text-[#1a1a1a]">
      <header className="flex h-[130px] shrink-0 items-center border-b-2 border-[#6f6f6f] px-12">
        <h2 className="-mt-px text-[35px] font-medium leading-[44px]">Edit widget</h2>
      </header>
      <nav className="flex h-[84px] shrink-0 items-center border-b-2 border-[#6f6f6f] pl-[54px]">
        <svg viewBox="0 0 27 27" className="-mt-0.5 h-[27px] w-[27px]" fill="#3c4651">
          <path d="M0 0h12.200v12.200H0zM14.800 0H27v12.200H14.800zM0 14.800h12.200V27H0zM14.800 14.800H27V27H14.800z" />
        </svg>
        <span className="-mt-1.5 ml-[9px] whitespace-nowrap text-[#081a2e]">Select widget</span>
        <div className="ml-[34px] flex h-full w-[140px] flex-col justify-between">
          <svg viewBox="0 0 24 24" className="ml-[5px] mt-[28px] h-6 w-6" fill="#153a66">
            <path d="M10 0h4l1 3.500 3.500-2 3 3-2 3.500L24 9.500v4L20 14.500l2 4-3 3-4-2L14 24h-4l-1-4-4 2-4-4 3-3.500L1.500 12 4 10 1 6.500l4-4 4 1.500z" />
          </svg>
          <div className="h-2 -skew-x-12 bg-[#163861]" />
        </div>
      </nav>
      <div className="flex flex-1 justify-between">
        <aside className="flex w-[300px] flex-col">
          <div className="h-[232px] overflow-hidden pl-12 pt-[29px]">
            <h3 className="whitespace-nowrap text-[35px] font-medium leading-[46px]">Advanced map w</h3>
            <p className="-mt-[3px] whitespace-nowrap leading-10">
              Displays a map with
              <br />
              selected devices. Su
              <br />
              configuration of add
              <br />
              custom markers.
            </p>
          </div>
          <div className="flex-1 bg-[#757575] pl-8 pt-4">
            <div className="font-medium leading-10">Selected asset</div>
            <div className="mt-2 flex h-10 items-center">
              <svg viewBox="0 0 26 26" className="-mt-[9px] ml-[3px] h-[26px] w-[26px]">
                <circle cx="13" cy="13" r="13" fill="#205013" />
                <path d="M6.500 13.500L11 18L20 8.500" fill="none" stroke="#8d9a88" strokeWidth="3" />
              </svg>
              <svg viewBox="0 0 37 32" className="ml-[21px] mt-[6px] h-8 w-[37px]" fill="#1a1a1a">
                <path d="M0 5h29.500V0L37 7L29.500 14V9H0zM37 23H7.500V18L0 25L7.500 32V27H37z" />
              </svg>
              <span className="ml-3">Position #1</span>
            </div>
          </div>
        </aside>
        <div className="flex w-[400px] flex-col">
          <div className="h-[234px] border-b-2 border-[#6f6f6f] pt-20">
            <div className="mr-12 h-16 border-2 border-[#606060]" />
          </div>
          <div className="mr-12 mt-[173px] flex h-[122px] justify-between border-y-2 border-[#6f6f6f] pl-[90px] pr-[37px] pt-5">
            <span className="leading-10">03:58</span>
            <div className="mt-1 flex flex-col gap-[3px]">
              <div className="size-1.5 bg-[#454d56]" />
              <div className="size-1.5 bg-[#454d56]" />
              <div className="size-1.5 bg-[#454d56]" />
            </div>
          </div>
        </div>
      </div>
      <footer className="h-[160px] shrink-0 border-t-2 border-[#6b6b6b]" />
    </section>
  );
}

/* ---------- dimmed page ---------- */

function Page() {
  return (
    <div className="flex h-[1670px] flex-col overflow-hidden bg-[#353636] text-[#0b0c0d]">
      <header className="flex h-[52px] shrink-0 justify-between border-b-2 border-[#313131] bg-[#393939]">
        <div className="-mt-[41px] ml-[11px] text-[50px] font-medium leading-[56px] text-[#07101b]">test</div>
        <div className="flex">
          <div className="w-[122px] border-x-2 border-[#323232] pl-[67px]">
            <svg viewBox="0 0 18 12" className="h-3 w-[18px]" fill="none" stroke="#07101b" strokeWidth="6">
              <path d="M0 -5L15 6" />
            </svg>
          </div>
          <div className="flex w-[83px] gap-[5px] pl-[35px]">
            <div className="h-[11px] w-[14px] bg-[#07101b]" />
            <div className="h-[11px] w-[14px] bg-[#07101b]" />
            <div className="h-[11px] w-[14px] bg-[#07101b]" />
          </div>
        </div>
      </header>
      <div className="h-[98px] shrink-0 border-b-2 border-[#343434] bg-[#393939] pl-[6px] pt-[37px]">
        <svg viewBox="0 0 32 28" className="h-7 w-8" fill="#14181e">
          <path d="M1 8V1h9l3 3h17v4h-2V6H12L9 3H3v5zM0 10.500H32L29.500 27H2.500z" />
        </svg>
      </div>
      <div className="flex h-24 shrink-0 items-center justify-end bg-[#383838] pr-[23px] text-[#050b13] shadow-[0_6px_30px_rgba(0,0,0,0.18)]">widget</div>
      <div className="mt-[46px] flex h-[594px] w-[338px] shrink-0 flex-col bg-[#393939]">
        <div className="flex h-[112px] items-center border-b-2 border-[#353535] pb-[17px] pl-[3px] text-2xl text-[#1d1f21]">WIDGET</div>
        <div className="h-[212px] pt-8 font-bold leading-10">
          <div className="-ml-[13px]">dget</div>
          <div className="-ml-[2px]">ion</div>
          <div className="-ml-[6px]">uloc</div>
          <div className="-ml-[5px] mt-4 font-normal text-[#15191c]">tails</div>
        </div>
        <div className="h-[124px] border-y-2 border-[#2a2a2a] bg-[#343636] font-['DejaVu_Sans_Mono'] leading-10 text-[#101516]">
          <div className="-ml-[2px]">Nu</div>
          <div>In_</div>
        </div>
        <div className="h-[54px] border-b-2 border-[#2f2f2f]" />
        <div className="flex-1 border-b-2 border-[#2d2d2d] bg-[#363636]" />
      </div>
    </div>
  );
}

export default function App() {
  return (
    <main className="relative h-[1670px] w-[1950px] overflow-hidden font-[Roboto,sans-serif] text-[28px] text-[#333333]">
      <Page />
      <div className="absolute left-[38px] top-6 h-[1326px] w-[1800px] rounded-lg shadow-[0_20px_140px_rgba(0,0,0,0.16),0_8px_30px_rgba(0,0,0,0.22)]" />
      <EditWidgetDialog />
      <div className="absolute left-[338px] top-6 h-[1550px] w-[1200px] rounded-lg shadow-[0_20px_140px_rgba(0,0,0,0.16),0_6px_24px_rgba(0,0,0,0.26)]" />
      <CreateTrackDialog />
    </main>
  );
}
